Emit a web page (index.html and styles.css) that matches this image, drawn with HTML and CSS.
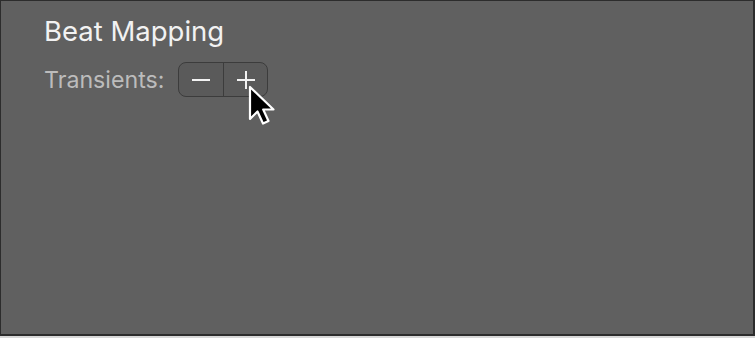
FILE: index.html
```html
<!DOCTYPE html>
<html lang="en">
<head>
    <meta charset="UTF-8">
    <title>Beat Mapping</title>
    <link rel="stylesheet" href="styles.css">
</head>
<body>
    <div class="panel">
        <h1 class="title">Beat Mapping</h1>
        <div class="row">
            <span class="label">Transients:</span>
            <div class="stepper">
                <button class="step">
                    <svg width="18" height="18" viewBox="0 0 18 18"><path d="M0 9H18" stroke="#f2f2f2" stroke-width="2"/></svg>
                </button>
                <button class="step">
                    <svg width="18" height="18" viewBox="0 0 18 18"><path d="M0 9H18M9 0V18" stroke="#f2f2f2" stroke-width="2"/></svg>
                </button>
                <svg class="cursor" width="32" height="44" viewBox="0 0 32 44">
                    <path d="M2 2 L2 34 L9.5 26.5 L15 38.5 L20.5 36 L15.2 24.5 L25.5 24.5 Z" fill="#000" stroke="#fff" stroke-width="2.2" stroke-linejoin="round"/>
                </svg>
            </div>
        </div>
    </div>
</body>
</html>
```

FILE: styles.css
```css
body {
    margin: 0;
    background-color: #d8d8d8;
    font-family: Inter, "Liberation Sans", sans-serif;
}
.panel {
    box-sizing: border-box;
    width: 755px;
    height: 336px;
    padding: 12px 43px;
    background-color: #606060;
    border: 2px solid #2c2c2c;
    border-top-width: 1px;
    border-left-width: 1px;
}
.title {
    margin: 0;
    font-size: 27.5px;
    font-weight: 400;
    line-height: 36px;
    color: #f2f2f2;
}
.row {
    display: flex;
    align-items: center;
    gap: 14px;
    margin-top: 13px;
}
.label {
    font-size: 23.2px;
    color: #bcbcbc;
}
.stepper {
    position: relative;
    display: flex;
    height: 33px;
    border: 1px solid #3c3c3c;
    border-radius: 8px;
    background-color: #5a5a5a;
}
.step {
    display: flex;
    align-items: center;
    justify-content: center;
    width: 44px;
    padding: 0;
    border: none;
    background: none;
}
.step + .step {
    border-left: 1px solid #3c3c3c;
}
.cursor {
    position: absolute;
    left: 69px;
    top: 22px;
}
```
